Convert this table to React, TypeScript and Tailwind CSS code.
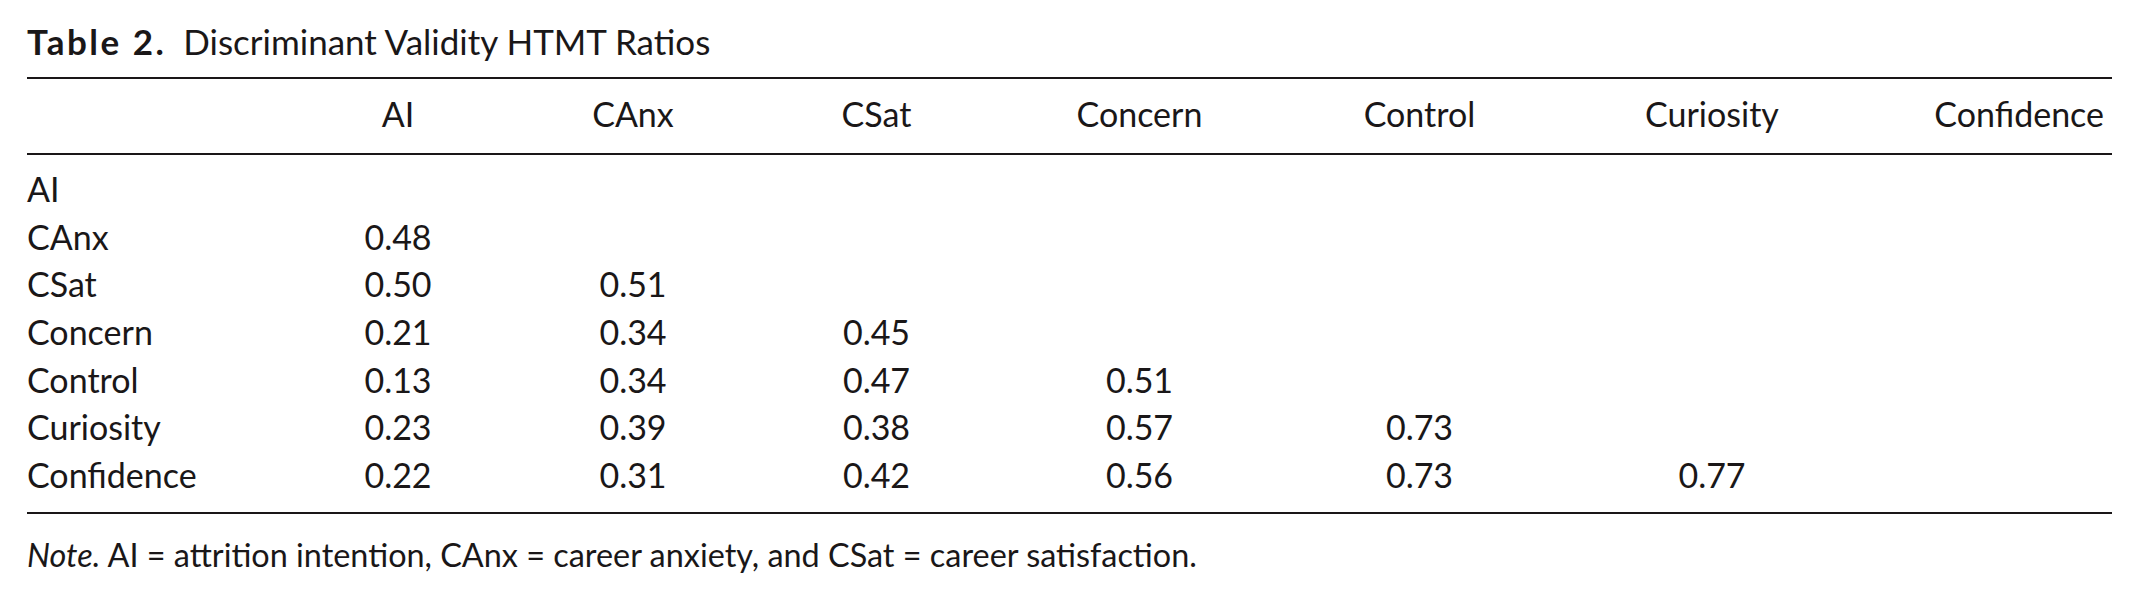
const headers = ['AI', 'CAnx', 'CSat', 'Concern', 'Control', 'Curiosity', 'Confidence'];

const rows: { label: string; values: string[] }[] = [
  { label: 'AI', values: [] },
  { label: 'CAnx', values: ['0.48'] },
  { label: 'CSat', values: ['0.50', '0.51'] },
  { label: 'Concern', values: ['0.21', '0.34', '0.45'] },
  { label: 'Control', values: ['0.13', '0.34', '0.47', '0.51'] },
  { label: 'Curiosity', values: ['0.23', '0.39', '0.38', '0.57', '0.73'] },
  { label: 'Confidence', values: ['0.22', '0.31', '0.42', '0.56', '0.73', '0.77'] },
];

const cols = 'grid grid-cols-[254px_234px_236px_251px_275px_285px_300px_1fr]';

function App() {
  return (
    <div
      className="w-[2139px] h-[601px] bg-white px-[27px] pt-[21px] text-[#1a1718]"
      style={{ fontFamily: 'Lato, "Open Sans", sans-serif' }}
    >
      <h2 className="text-[35px] leading-[40px]">
        <span className="font-bold tracking-[2.5px]">Table 2.</span>
        <span className="ml-[17px]">Discriminant Validity HTMT Ratios</span>
      </h2>

      <div className="mt-[16px] h-[2px] bg-[#1a1718]" />

      <div className={`${cols} h-[74px] pb-[5px] items-center text-[34px]`}>
        <div />
        {headers.map((h, i) => (
          <div key={h} className={i === headers.length - 1 ? 'text-right pr-[8px]' : 'text-center'}>
            {h}
          </div>
        ))}
      </div>

      <div className="h-[2px] bg-[#1a1718]" />

      <div className="pt-[8px] pb-[15px] text-[34px]">
        {rows.map((r) => (
          <div key={r.label} className={`${cols} h-[47.7px] items-center`}>
            <div>{r.label}</div>
            {r.values.map((v, i) => (
              <div key={i} className="text-center">
                {v}
              </div>
            ))}
          </div>
        ))}
      </div>

      <div className="h-[2px] bg-[#1a1718]" />

      <p className="mt-[21px] text-[32.4px] leading-[40px]">
        <span className="italic">Note.</span> AI = attrition intention, CAnx = career anxiety, and CSat = career
        satisfaction.
      </p>
    </div>
  );
}

export default App;
